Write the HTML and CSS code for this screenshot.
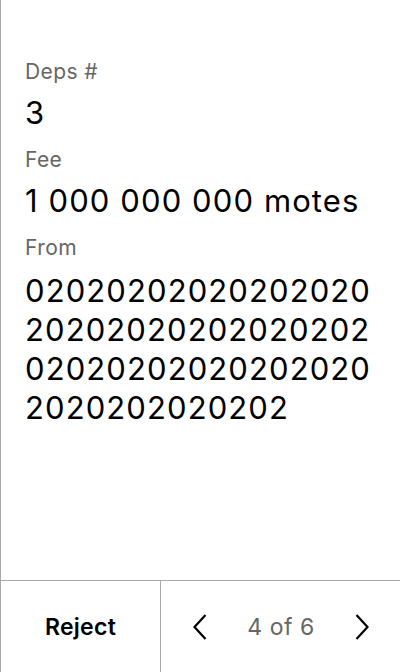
FILE: index.html
```
<!DOCTYPE html>
<html>
<head>
<meta charset="utf-8">
<link rel="stylesheet" href="styles.css">
</head>
<body>
<div class="screen">
  <div class="content">
    <div class="label">Deps #</div>
    <div class="value">3</div>
    <div class="label">Fee</div>
    <div class="value">1 000 000 000 motes</div>
    <div class="label">From</div>
    <div class="value long">0202020202020202020202020202020202020202020202020202020202020202</div>
  </div>
  <div class="footer">
    <div class="reject">Reject</div>
    <div class="pager">
      <svg class="chev" width="14" height="26" viewBox="0 0 14 26"><path d="M12.5 1 L1.5 13 L12.5 25" fill="none" stroke="#000" stroke-width="2.2"/></svg>
      <span class="count">4 of 6</span>
      <svg class="chev" width="14" height="26" viewBox="0 0 14 26"><path d="M1.5 1 L12.5 13 L1.5 25" fill="none" stroke="#000" stroke-width="2.2"/></svg>
    </div>
  </div>
</div>
</body>
</html>
```
FILE: styles.css
```
html, body {
  margin: 0;
  padding: 0;
  background: #fff;
}
.screen {
  width: 400px;
  height: 672px;
  box-sizing: border-box;
  border-left: 1px solid #aaa;
  display: flex;
  flex-direction: column;
  font-family: Inter, "Noto Sans", sans-serif;
  color: #000;
}
.content {
  flex: 1;
  padding: 60px 20px 0 24px;
}
.label {
  font-size: 21px;
  line-height: 24px;
  letter-spacing: 0.4px;
  color: #666;
}
.value {
  font-size: 31px;
  line-height: 39px;
  letter-spacing: 1.1px;
  margin-top: 9px;
  margin-bottom: 16px;
}
.long {
  word-break: break-all;
  margin-top: 11px;
}
.footer {
  height: 91px;
  border-top: 1px solid #aaa;
  display: flex;
}
.reject {
  width: 159px;
  border-right: 1px solid #aaa;
  display: flex;
  align-items: center;
  justify-content: center;
  font-size: 23px;
  font-weight: 600;
  letter-spacing: 0.3px;
}
.pager {
  flex: 1;
  display: flex;
  align-items: center;
  justify-content: space-between;
  padding: 0 31px 0 32px;
}
.count {
  font-size: 23px;
  letter-spacing: 0.5px;
  color: #666;
}
```
